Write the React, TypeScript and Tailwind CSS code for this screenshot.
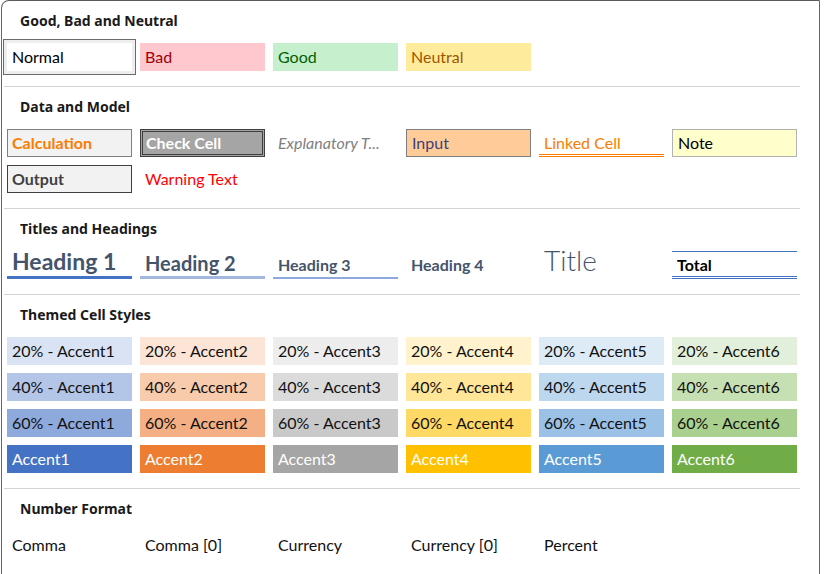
import React from "react";

const cellBase = "h-[28px] flex items-center text-[16px] leading-none font-['Lato',sans-serif] whitespace-nowrap overflow-hidden";

function Header({ children }: { children: React.ReactNode }) {
  return (
    <div className="h-[42px] pl-[18px] pt-[11px]">
      <div className="text-[14px] leading-[18px] font-bold text-[#1a1a1a] font-['Noto_Sans',sans-serif]">{children}</div>
    </div>
  );
}

function Divider() {
  return (
    <>
      <div className="h-[15px]" />
      <div className="ml-[2px] w-[796px] h-px bg-[#d3d3d3]" />
    </>
  );
}

function Grid({ children }: { children: React.ReactNode }) {
  return <div className="grid grid-cols-[repeat(6,125px)] gap-[8px] pl-[5px]">{children}</div>;
}

const themed: { t: string; c: string }[] = [
  { t: "20% - Accent1", c: "bg-[#dae3f3] text-[#111]" },
  { t: "20% - Accent2", c: "bg-[#fce4d6] text-[#111]" },
  { t: "20% - Accent3", c: "bg-[#ededed] text-[#111]" },
  { t: "20% - Accent4", c: "bg-[#fff2cc] text-[#111]" },
  { t: "20% - Accent5", c: "bg-[#ddebf7] text-[#111]" },
  { t: "20% - Accent6", c: "bg-[#e2efda] text-[#111]" },
  { t: "40% - Accent1", c: "bg-[#b4c6e7] text-[#111]" },
  { t: "40% - Accent2", c: "bg-[#f8cbad] text-[#111]" },
  { t: "40% - Accent3", c: "bg-[#dbdbdb] text-[#111]" },
  { t: "40% - Accent4", c: "bg-[#ffe699] text-[#111]" },
  { t: "40% - Accent5", c: "bg-[#bdd7ee] text-[#111]" },
  { t: "40% - Accent6", c: "bg-[#c6e0b4] text-[#111]" },
  { t: "60% - Accent1", c: "bg-[#8ea9db] text-[#111]" },
  { t: "60% - Accent2", c: "bg-[#f4b084] text-[#111]" },
  { t: "60% - Accent3", c: "bg-[#c9c9c9] text-[#111]" },
  { t: "60% - Accent4", c: "bg-[#ffd966] text-[#111]" },
  { t: "60% - Accent5", c: "bg-[#9bc2e6] text-[#111]" },
  { t: "60% - Accent6", c: "bg-[#a9d08e] text-[#111]" },
  { t: "Accent1", c: "bg-[#4472c4] text-white" },
  { t: "Accent2", c: "bg-[#ed7d31] text-white" },
  { t: "Accent3", c: "bg-[#a5a5a5] text-white" },
  { t: "Accent4", c: "bg-[#ffc000] text-white" },
  { t: "Accent5", c: "bg-[#5b9bd5] text-white" },
  { t: "Accent6", c: "bg-[#70ad47] text-white" },
];

export default function App() {
  return (
    <div className="w-[827px] h-[574px] bg-white overflow-hidden">
      <div className="ml-[1px] w-[819px] h-[600px] border-l border-t border-r border-[#666666] border-t-[#5a5a5a] rounded-tl-[8px] bg-white">
        {/* Good, Bad and Neutral */}
        <Header>Good, Bad and Neutral</Header>
        <Grid>
          <div className={`${cellBase} bg-white pl-[5px] text-black shadow-[0_0_0_3px_#eeeeee,0_0_0_4px_#6b6b6b]`}>Normal</div>
          <div className={`${cellBase} bg-[#ffc7ce] pl-[5px] text-[#9c0006]`}>Bad</div>
          <div className={`${cellBase} bg-[#c6efce] pl-[5px] text-[#006100]`}>Good</div>
          <div className={`${cellBase} bg-[#ffeb9c] pl-[5px] text-[#9c5700]`}>Neutral</div>
        </Grid>
        <Divider />

        {/* Data and Model */}
        <Header>Data and Model</Header>
        <Grid>
          <div className={`${cellBase} bg-[#f2f2f2] border border-[#7f7f7f] pl-[4px] font-bold text-[#fa7d00]`}>Calculation</div>
          <div className={`${cellBase} bg-[#a5a5a5] border-[3px] border-double border-[#3f3f3f] pl-[3px] font-bold text-white`}>Check Cell</div>
          <div className={`${cellBase} pl-[5px] italic text-[#7f7f7f]`}>Explanatory T...</div>
          <div className={`${cellBase} bg-[#ffcc99] border border-[#7f7f7f] pl-[5px] text-[#3f3f76]`}>Input</div>
          <div className={`${cellBase} border-b-[3px] border-double border-[#fa7d00] pl-[5px] pt-[2px] text-[#fa7d00]`}>Linked Cell</div>
          <div className={`${cellBase} bg-[#ffffcc] border border-[#b2b2b2] pl-[5px] text-black`}>Note</div>
          <div className={`${cellBase} bg-[#f2f2f2] border border-[#3f3f3f] pl-[4px] font-bold text-[#3f3f3f]`}>Output</div>
          <div className={`${cellBase} pl-[5px] text-[#ff0000]`}>Warning Text</div>
        </Grid>
        <Divider />

        {/* Titles and Headings */}
        <Header>Titles and Headings</Header>
        <Grid>
          <div className="h-[28px] flex items-end border-b-[3px] border-[#4472c4] pl-[5px] pb-[3px] font-['Lato',sans-serif]">
            <span className="text-[23px] leading-none font-bold text-[#44546a]">Heading 1</span>
          </div>
          <div className="h-[28px] flex items-end border-b-[3px] border-[#a2b8e1] pl-[5px] pb-[3px] font-['Lato',sans-serif]">
            <span className="text-[20px] leading-none font-bold text-[#44546a]">Heading 2</span>
          </div>
          <div className="h-[28px] flex items-end border-b-2 border-[#8ea9db] pl-[5px] pb-[4px] font-['Lato',sans-serif]">
            <span className="text-[16px] leading-none font-bold text-[#44546a]">Heading 3</span>
          </div>
          <div className="h-[28px] flex items-end pl-[5px] pb-[6px] font-['Lato',sans-serif]">
            <span className="text-[16px] leading-none font-bold text-[#44546a]">Heading 4</span>
          </div>
          <div className="h-[28px] flex items-end pl-[5px] pb-[5px] font-['Lato',sans-serif]">
            <span className="text-[28px] leading-none font-light text-[#44546a]">Title</span>
          </div>
          <div className="h-[28px] flex items-end border-t border-t-[#4472c4] border-b-[3px] border-b-[#4472c4] border-double pl-[5px] pb-[3px] font-['Lato',sans-serif]">
            <span className="text-[16px] leading-none font-bold text-black">Total</span>
          </div>
        </Grid>
        <Divider />

        {/* Themed Cell Styles */}
        <Header>Themed Cell Styles</Header>
        <Grid>
          {themed.map((c) => (
            <div key={c.t} className={`${cellBase} pl-[5px] ${c.c}`}>{c.t}</div>
          ))}
        </Grid>
        <Divider />

        {/* Number Format */}
        <Header>Number Format</Header>
        <Grid>
          {["Comma", "Comma [0]", "Currency", "Currency [0]", "Percent"].map((t) => (
            <div key={t} className={`${cellBase} pl-[5px] text-[#111]`}>{t}</div>
          ))}
        </Grid>
      </div>
    </div>
  );
}
